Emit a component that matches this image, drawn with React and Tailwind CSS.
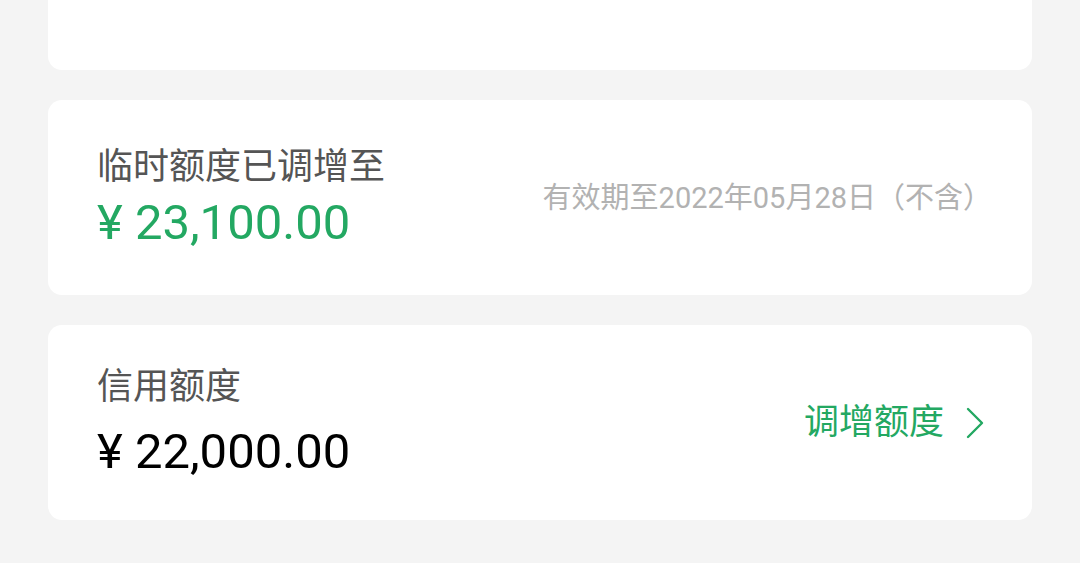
const font = { fontFamily: 'Roboto, "Noto Sans CJK SC", sans-serif' }

function Card({ children }) {
  return (
    <div className="bg-white rounded-[14px] h-[195px] flex items-center justify-between pl-[49px] pr-[46px]">
      {children}
    </div>
  )
}

export default function App() {
  return (
    <div className="min-h-[563px] bg-[#f4f4f4] px-[48px] pb-[43px] flex flex-col gap-[30px]" style={font}>
      <div className="bg-white rounded-b-[14px] h-[70px]" />

      <Card>
        <div className="flex flex-col">
          <span className="text-[36px] leading-[48px] text-[#555555]">临时额度已调增至</span>
          <span className="mt-[2px] text-[49px] leading-[60px] text-[#23a862]">¥ 23,100.00</span>
        </div>
        <span className="-mr-[6px] text-[29px] leading-[38px] text-[#b2b2b2]">有效期至2022年05月28日（不含）</span>
      </Card>

      <Card>
        <div className="flex flex-col">
          <span className="text-[36px] leading-[48px] text-[#555555]">信用额度</span>
          <span className="mt-[11px] text-[49px] leading-[60px] text-black">¥ 22,000.00</span>
        </div>
        <div className="flex items-center gap-[20px] text-[#23a862]">
          <span className="text-[35px] leading-[46px]">调增额度</span>
          <svg width="22" height="34" viewBox="0 0 22 34" fill="none" stroke="currentColor" strokeWidth="2.4" strokeLinecap="round" strokeLinejoin="round">
            <polyline points="4,3 18,17 4,31" />
          </svg>
        </div>
      </Card>
    </div>
  )
}
